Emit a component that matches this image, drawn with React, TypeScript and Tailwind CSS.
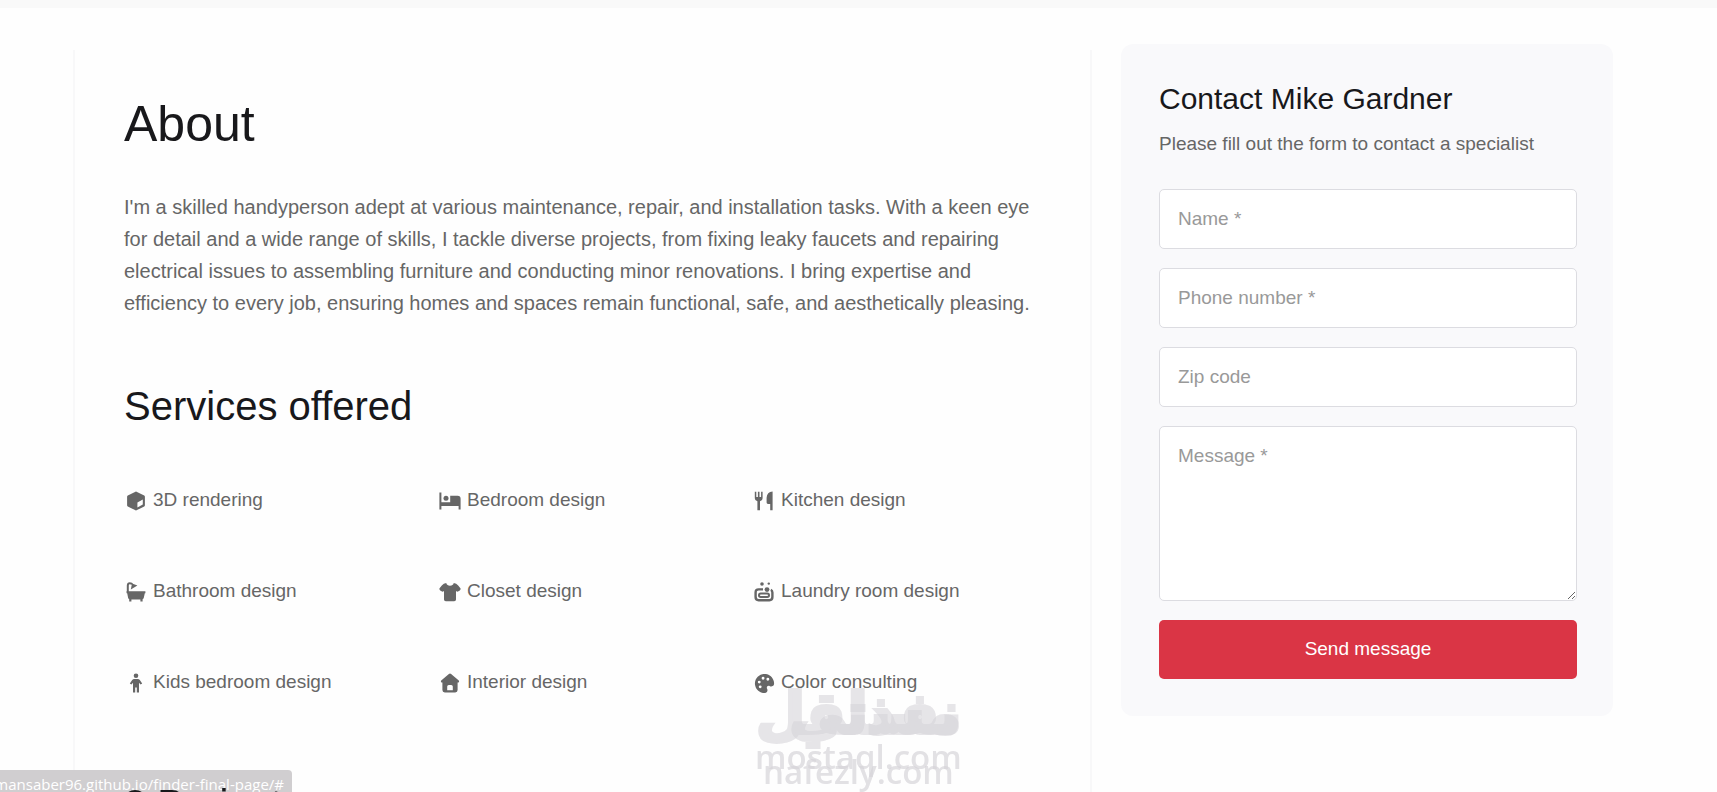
import React from 'react';
import { BiSolidPalette } from 'react-icons/bi';

interface Service {
  label: string;
  icon: React.ReactNode;
}

const CubeIcon = () => (
  <svg viewBox="0 0 20 20" className="size-5" fill="currentColor" aria-hidden="true">
    <path
      fillRule="evenodd"
      d="M10 0.4 18.2 4.6Q18.9 5 18.9 5.8V14.2Q18.9 15 18.2 15.4L10 19.6 1.8 15.4Q1.1 15 1.1 14.2V5.8Q1.1 5 1.8 4.6ZM11.4 11.4V16.4L16.8 13.6V8.4Z"
    />
  </svg>
);

const BedIcon = () => (
  <svg viewBox="0 0 22 20" className="h-5 w-[22px] shrink-0" fill="currentColor" aria-hidden="true">
    <path d="M0.4 1.6H2.4V11.2H11.2V4.8H18.6Q21.6 4.8 21.6 7.8V18.4H19.6V15H2.4V18.4H0.4Z" />
    <circle cx="7" cy="7.2" r="2.5" />
  </svg>
);

const UtensilsIcon = () => (
  <svg viewBox="0 0 20 20" className="size-5" fill="currentColor" aria-hidden="true">
    <path d="M0.8 0.8H2.3V6H3.9V0.8H5.5V6H7.1V0.8H8.6V7.2Q8.6 9.8 6 10.3V19.2H3.4V10.3Q0.8 9.8 0.8 7.2Z" />
    <path d="M18.6 0.6V19.2H16.2V13H14Q12.6 13 12.6 11.6V6.8Q12.9 1 18.6 0.6Z" />
  </svg>
);

const BathIcon = () => (
  <svg viewBox="0 0 20 20" className="size-5" aria-hidden="true">
    <path d="M1.8 10.4V3.6Q1.8 1.2 3.8 1.2T6.2 2.6" fill="none" stroke="currentColor" strokeWidth="2" />
    <path d="M4.8 7.6 6 1.4 11.4 3.6Z" fill="currentColor" />
    <path
      d="M0.6 9.2H19.4V11.2H18.8L17.8 15.8Q17.4 17 16.6 17.2V19.4H14.4V17.6H5.4V19.4H3.2V17.2Q2.4 17 2.1 15.8L1.2 11.2H0.6Z"
      fill="currentColor"
    />
  </svg>
);

const ShirtIcon = () => (
  <svg viewBox="0 0 22 20" className="h-5 w-[22px] shrink-0" fill="currentColor" aria-hidden="true">
    <path d="M7.2 1Q8 3.8 11 3.8T14.8 1Q17.4 1.2 19.2 3.4L21.6 6.6Q21.8 7.6 20.8 8.4L19 9.6Q18 9.8 17 9V17.4Q17 19.2 15.2 19.2H6.8Q5 19.2 5 17.4V9Q4 9.8 3 9.6L1.2 8.4Q0.2 7.6 0.4 6.6L2.8 3.4Q4.6 1.2 7.2 1Z" />
  </svg>
);

const SoapIcon = () => (
  <svg viewBox="0 0 20 20" className="size-5" fill="none" stroke="currentColor" aria-hidden="true">
    <path d="M9 7.4H4.6Q1.6 7.4 1.6 10.4V15Q1.6 18.2 4.6 18.2H15.4Q18.4 18.2 18.4 15V10.4Q18.4 8.4 16.8 7.8" strokeWidth="2.4" />
    <rect x="5" y="11.6" width="10" height="3.4" rx="1.7" strokeWidth="2" />
    <circle cx="13" cy="7.6" r="2.4" fill="currentColor" stroke="none" />
    <circle cx="8" cy="2" r="1.8" fill="currentColor" stroke="none" />
    <circle cx="14.8" cy="1.6" r="1.2" fill="currentColor" stroke="none" />
  </svg>
);

const ChildIcon = () => (
  <svg viewBox="0 0 20 20" className="size-5" fill="currentColor" aria-hidden="true">
    <circle cx="10" cy="2.8" r="2.3" />
    <path d="M8.2 6H11.8Q13 6 13.8 7L16.2 10.4 14.6 11.6 13 9.8V19.4H10.8V14.4H9.2V19.4H7V9.8L5.4 11.6 3.8 10.4 6.2 7Q7 6 8.2 6Z" />
  </svg>
);

const HomeIcon = () => (
  <svg viewBox="0 0 20 20" className="size-5" fill="currentColor" aria-hidden="true">
    <path
      fillRule="evenodd"
      d="M8.9 0.9Q10 0 11.1 0.9L18.8 7.6Q19.6 8.6 18.6 9.4H17.6V17Q17.6 19.4 15.2 19.4H4.8Q2.4 19.4 2.4 17V9.4H1.4Q0.4 8.6 1.2 7.6ZM7.2 17.2H12.8V13.6Q12.8 12 11.2 12H8.8Q7.2 12 7.2 13.6Z"
    />
  </svg>
);

const services: Service[] = [
  { label: '3D rendering', icon: <CubeIcon /> },
  { label: 'Bedroom design', icon: <BedIcon /> },
  { label: 'Kitchen design', icon: <UtensilsIcon /> },
  { label: 'Bathroom design', icon: <BathIcon /> },
  { label: 'Closet design', icon: <ShirtIcon /> },
  { label: 'Laundry room design', icon: <SoapIcon /> },
  { label: 'Kids bedroom design', icon: <ChildIcon /> },
  { label: 'Interior design', icon: <HomeIcon /> },
  { label: 'Color consulting', icon: <BiSolidPalette size={23} /> },
];

interface FieldProps {
  id: string;
  label: string;
  type?: string;
}

const Field: React.FC<FieldProps> = ({ id, label, type = 'text' }) => (
  <input
    id={id}
    type={type}
    aria-label={label}
    placeholder={label}
    className="block w-full h-15 px-[18px] rounded-[5px] border border-[#dcdce1] bg-white text-[19px] text-[#666] placeholder:text-[#999]"
  />
);

const ContactCard = () => (
  <aside className="w-[492px] shrink-0 self-start rounded-xl bg-[#f9f9fb] pl-[38px] pr-9 pt-[37px] pb-[37px]">
    <h2 className="text-[30px] leading-9 text-[#18181b]">Contact Mike Gardner</h2>
    <p className="mt-3 text-[19px] leading-[30px] text-[#666]">Please fill out the form to contact a specialist</p>
    <form className="mt-[30px] flex flex-col gap-[19px]" onSubmit={(e) => e.preventDefault()}>
      <Field id="name" label="Name *" />
      <Field id="phone" label="Phone number *" type="tel" />
      <Field id="zip" label="Zip code" />
      <textarea
        id="message"
        aria-label="Message *"
        placeholder="Message *"
        className="block w-full h-[175px] px-[18px] py-[14px] rounded-[5px] border border-[#dcdce1] bg-white text-[19px] leading-[30px] text-[#666] placeholder:text-[#999]"
      />
      <button type="submit" className="h-[59px] rounded-[5px] bg-[#da3545] text-[19px] text-white">
        Send message
      </button>
    </form>
  </aside>
);

const Watermark = () => (
  <div className="pointer-events-none fixed bottom-0 left-[755px] h-[112px] w-[206px] text-[#d6d4d9] whitespace-nowrap" aria-hidden="true">
    <div className="absolute right-0 top-0 text-[56px] leading-[68px] font-bold opacity-60 font-['DejaVu_Sans',sans-serif] [-webkit-text-stroke:4px_#d6d4d9]" dir="rtl">
      مستقل
    </div>
    <div className="absolute right-0 top-0 text-[56px] leading-[68px] font-bold opacity-60 font-['DejaVu_Sans',sans-serif] [-webkit-text-stroke:4px_#d6d4d9]" dir="rtl">
      نفذلي
    </div>
    <div className="absolute left-0 top-[57px] text-[33px] leading-10 font-semibold opacity-70 font-['Open_Sans',sans-serif]">mostaql.com</div>
    <div className="absolute left-2 top-[72px] text-[33px] leading-10 font-semibold opacity-70 font-['Open_Sans',sans-serif]">nafezly.com</div>
  </div>
);

export default function App() {
  return (
    <div className="relative h-screen overflow-hidden bg-[#fefefe] font-['Liberation_Sans',Arial,sans-serif]">
      <div className="h-2 bg-[#f9f9f9]" />
      <div className="flex gap-[29px] pt-9 pl-[73px] pr-26">
        <main className="min-w-0 flex-1 mt-1.5 border-x-2 border-[#f8f8f9] pl-[49px] pr-[50px] pt-[44px]">
          <h1 className="text-[50px] leading-[60px] text-[#18181b]">About</h1>
          <p className="mt-[37px] text-[20px] leading-8 text-[#666]">
            I'm a skilled handyperson adept at various maintenance, repair, and installation tasks. With a keen eye for
            detail and a wide range of skills, I tackle diverse projects, from fixing leaky faucets and repairing
            electrical issues to assembling furniture and conducting minor renovations. I bring expertise and efficiency
            to every job, ensuring homes and spaces remain functional, safe, and aesthetically pleasing.
          </p>
          <h2 className="mt-[63px] text-[40px] leading-12 text-[#18181b]">Services offered</h2>
          <ul className="mt-[55px] grid grid-cols-3 gap-x-[26px]">
            {services.map((service) => (
              <li key={service.label} className="flex h-[91px] items-start gap-[5px] text-[19px] leading-[30px] text-[#666] whitespace-nowrap">
                <span className="flex h-8 w-6 items-center justify-center">{service.icon}</span>
                {service.label}
              </li>
            ))}
          </ul>
          <h2 className="relative z-10 mt-[22px] text-[40px] leading-12 text-[#18181b]">3 Projects</h2>
        </main>
        <ContactCard />
      </div>
      <div className="fixed bottom-0 left-0 flex h-[22px] w-[292px] items-end justify-end overflow-hidden rounded-tr-sm bg-[#d0ced0] pr-2 text-[15px] leading-4 whitespace-nowrap text-white font-['Open_Sans',sans-serif]">
        hmansaber96.github.io/finder-final-page/#
      </div>
      <Watermark />
    </div>
  );
}
